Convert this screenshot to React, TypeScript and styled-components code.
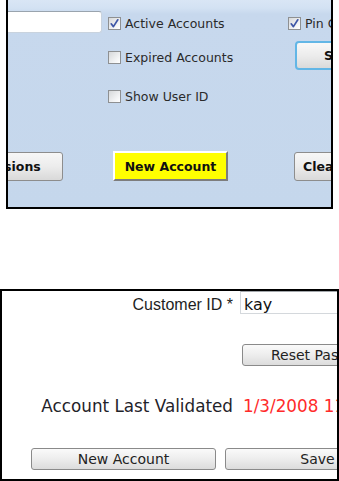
import styled, { createGlobalStyle } from "styled-components";

const GlobalStyle = createGlobalStyle`
    html, body {
        margin: 0;
        padding: 0;
        background: #fff;
    }
    body {
        font-family: "DejaVu Sans", Verdana, sans-serif;
    }
`

interface AreaProps {
    $area: string;
}

interface WidthProps {
    $width?: number;
}

const Check = ({checked}: { checked?: boolean }) => (
    <CheckBox>
        {checked && (
            <svg width="11" height="11" viewBox="0 0 11 11">
                <path d="M2.2 5.8 L4.4 8.6 L8.8 1.8" fill="none" stroke="#3d56a6" strokeWidth="1.7"
                      strokeLinecap="round" strokeLinejoin="round"/>
            </svg>
        )}
    </CheckBox>
)

export default function App() {
    return (
        <Page>
            <GlobalStyle/>
            <TopPanel>
                <FilterGrid>
                    <SearchInput $area="search" defaultValue="" readOnly/>
                    <CheckItem $area="active"><Check checked/>Active Accounts</CheckItem>
                    <CheckItem $area="pin"><Check checked/>Pin Customer</CheckItem>
                    <CheckItem $area="expired"><Check/>Expired Accounts</CheckItem>
                    <FocusButton $area="find">Search</FocusButton>
                    <CheckItem $area="userid"><Check/>Show User ID</CheckItem>
                </FilterGrid>
                <ActionRow>
                    <PanelButton $width={106}>Sessions</PanelButton>
                    <YellowButton>New Account</YellowButton>
                    <ClearButton>Clear</ClearButton>
                </ActionRow>
            </TopPanel>

            <BottomPanel>
                <FormGrid>
                    <FieldLabel>Customer ID *</FieldLabel>
                    <FieldInput defaultValue="kay" readOnly/>
                    <span/>
                    <ResetButton>Reset Password</ResetButton>
                    <InfoLabel>Account Last Validated</InfoLabel>
                    <DateValue>1/3/2008 11:42:17 AM</DateValue>
                </FormGrid>
                <FooterRow>
                    <FormButton>New Account</FormButton>
                    <FormButton>Save</FormButton>
                </FooterRow>
            </BottomPanel>
        </Page>
    )
}

const Page = styled.div`
    width: 339px;
    height: 481px;
    overflow: hidden;
    display: flex;
    flex-direction: column;
`

const TopPanel = styled.section`
    box-sizing: border-box;
    width: 327px;
    height: 209px;
    margin-left: 6px;
    border: 2px solid #000;
    border-top: none;
    overflow: hidden;
    background: linear-gradient(#d9e6f5 0, #d3e2f3 8px, #c7d8ed 14px, #c5d7ec 100%);
`

const FilterGrid = styled.div`
    display: grid;
    grid-template-columns: 130px 180px 160px;
    grid-template-rows: 24px 44px 34px;
    grid-template-areas:
        "search active pin"
        ". expired find"
        ". userid .";
    margin-left: -30px;
    padding-top: 11px;
`

const SearchInput = styled.input<AreaProps>`
    grid-area: ${p => p.$area};
    align-self: start;
    box-sizing: border-box;
    width: 124px;
    height: 22px;
    margin: 0;
    padding: 0 3px;
    border: 1px solid #c9d3de;
    border-top-color: #9aa4ae;
    border-radius: 0 3px 3px 0;
    background: #fff;
    outline: none;
`

const CheckItem = styled.label<AreaProps>`
    grid-area: ${p => p.$area};
    display: flex;
    align-items: center;
    gap: 4px;
    font-size: 12.5px;
    color: #2a2a2a;
    white-space: nowrap;
`

const CheckBox = styled.span`
    box-sizing: border-box;
    width: 13px;
    height: 13px;
    flex: none;
    display: flex;
    align-items: center;
    justify-content: center;
    border: 1px solid #8e9092;
    background: linear-gradient(135deg, #d6d8da, #f4f5f6 70%, #fff);
`

const ButtonBase = styled.button`
    box-sizing: border-box;
    margin: 0;
    font-family: "DejaVu Sans", Verdana, sans-serif;
    font-size: 12.5px;
    font-weight: bold;
    color: #111;
    white-space: nowrap;
    cursor: pointer;
`

const PanelButton = styled(ButtonBase)<WidthProps>`
    flex: none;
    width: ${p => (p.$width ? `${p.$width}px` : "auto")};
    height: 29px;
    padding: 0 8px;
    border: 1px solid #8d8d8d;
    border-radius: 3px;
    background: linear-gradient(#f7f7f7, #ececec 50%, #d9d9d9);
`

const ClearButton = styled(PanelButton)`
    margin-left: 16px;
    text-align: left;
    width: 70px;
`

const FocusButton = styled(ButtonBase)<AreaProps>`
    grid-area: ${p => p.$area};
    align-self: start;
    justify-self: start;
    height: 29px;
    margin: 6px 0 0 7px;
    padding: 0 27px;
    border: 2px solid #62b6e6;
    border-radius: 4px;
    background: linear-gradient(#f8f8f8, #ececec 50%, #dadada);
`

const ActionRow = styled.div`
    display: flex;
    align-items: flex-end;
    gap: 50px;
    margin: 38px 0 0 -51px;
`

const YellowButton = styled(ButtonBase)`
    flex: none;
    width: 115px;
    height: 30px;
    padding: 0;
    border: 2px solid;
    border-color: #ffffff #7d7d7d #7d7d7d #ffffff;
    background: #ffff00;
`

const BottomPanel = styled.section`
    box-sizing: border-box;
    width: 339px;
    height: 192px;
    margin-top: 80px;
    border: 2px solid #000;
    overflow: hidden;
    background: #fff;
`

const FormGrid = styled.div`
    display: grid;
    grid-template-columns: 231px minmax(0, 1fr);
    grid-template-rows: 23px 52px 50px;
    column-gap: 7px;
    align-items: end;
`

const FieldLabel = styled.span`
    font-family: "Liberation Sans", Arial, sans-serif;
    font-size: 16px;
    line-height: 16px;
    margin-bottom: 1px;
    color: #1e1e1e;
    text-align: right;
    white-space: nowrap;
`

const FieldInput = styled.input`
    box-sizing: border-box;
    width: 130px;
    height: 23px;
    margin: 0;
    padding: 3px 3px 0;
    border: 1px solid #d4d8dc;
    border-top-color: #a3a7ab;
    font-family: "DejaVu Sans", Verdana, sans-serif;
    font-size: 16px;
    color: #111;
    outline: none;
`

const FormButton = styled.button`
    box-sizing: border-box;
    flex: none;
    width: 185px;
    height: 22px;
    margin: 0;
    padding: 0;
    border: 1px solid #8a8a8a;
    border-radius: 3px;
    background: linear-gradient(#fafafa, #ededed 50%, #dcdcdc);
    font-family: "DejaVu Sans", Verdana, sans-serif;
    font-size: 14px;
    color: #222;
    white-space: nowrap;
`

const ResetButton = styled(FormButton)`
    width: auto;
    justify-self: start;
    margin-left: 2px;
    padding: 0 28px;
`

const InfoLabel = styled.span`
    font-size: 16.8px;
    line-height: 20px;
    color: #1f2329;
    text-align: right;
    white-space: nowrap;
`

const DateValue = styled(InfoLabel)`
    color: #ff2a2a;
    text-align: left;
    padding-left: 3px;
`

const FooterRow = styled.div`
    display: flex;
    gap: 9px;
    margin: 32px 0 0 29px;
`
